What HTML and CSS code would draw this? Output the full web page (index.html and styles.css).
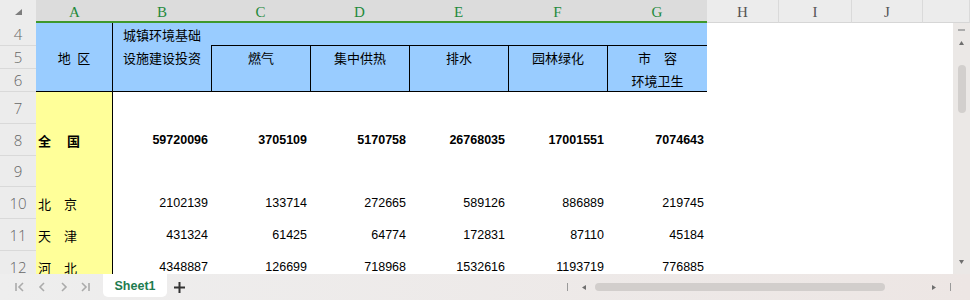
FILE: index.html
```html
<!DOCTYPE html>
<html lang="zh-CN">
<head>
    <meta charset="UTF-8">
    <meta name="viewport" content="width=device-width, initial-scale=1.0">
    <title>城镇环境基础设施建设投资</title>
    <link rel="stylesheet" href="styles.css">
</head>
<body>
    <div class="sheet">
        <!-- 列标题 -->
        <div class="col-heads">
            <div class="corner">
                <svg width="7" height="6" viewBox="0 0 7 6"><polygon points="7,0 7,6 0,6" fill="#7d7d7d"/></svg>
            </div>
            <div class="col-head is-selected">A</div>
            <div class="col-head is-selected">B</div>
            <div class="col-head is-selected">C</div>
            <div class="col-head is-selected">D</div>
            <div class="col-head is-selected">E</div>
            <div class="col-head is-selected">F</div>
            <div class="col-head is-selected">G</div>
            <div class="col-head">H</div>
            <div class="col-head">I</div>
            <div class="col-head">J</div>
            <div class="col-head"></div>
        </div>

        <div class="body">
            <div class="cells">
                <!-- 表头 第4-6行 -->
                <div class="head-block">
                    <div class="row-num r4">4</div>
                    <div class="row-num r5">5</div>
                    <div class="row-num r6">6</div>
                    <div class="hcell region">地&ensp;区</div>
                    <div class="hcell invest">城镇环境基础<br>设施建设投资</div>
                    <div class="hcell group"></div>
                    <div class="hcell sub col-c">燃气</div>
                    <div class="hcell sub col-d">集中供热</div>
                    <div class="hcell sub col-e">排水</div>
                    <div class="hcell sub col-f">园林绿化</div>
                    <div class="hcell sub col-g">市　容<br>环境卫生</div>
                </div>

                <div class="row">
                    <div class="row-num">7</div>
                    <div class="name"></div>
                </div>
                <div class="row is-total">
                    <div class="row-num">8</div>
                    <div class="name">全　 国</div>
                    <div class="num">59720096</div>
                    <div class="num">3705109</div>
                    <div class="num">5170758</div>
                    <div class="num">26768035</div>
                    <div class="num">17001551</div>
                    <div class="num">7074643</div>
                </div>
                <div class="row row-short">
                    <div class="row-num">9</div>
                    <div class="name"></div>
                </div>
                <div class="row">
                    <div class="row-num">10</div>
                    <div class="name">北　京</div>
                    <div class="num">2102139</div>
                    <div class="num">133714</div>
                    <div class="num">272665</div>
                    <div class="num">589126</div>
                    <div class="num">886889</div>
                    <div class="num">219745</div>
                </div>
                <div class="row">
                    <div class="row-num">11</div>
                    <div class="name">天　津</div>
                    <div class="num">431324</div>
                    <div class="num">61425</div>
                    <div class="num">64774</div>
                    <div class="num">172831</div>
                    <div class="num">87110</div>
                    <div class="num">45184</div>
                </div>
                <div class="row">
                    <div class="row-num">12</div>
                    <div class="name">河　北</div>
                    <div class="num">4348887</div>
                    <div class="num">126699</div>
                    <div class="num">718968</div>
                    <div class="num">1532616</div>
                    <div class="num">1193719</div>
                    <div class="num">776885</div>
                </div>
            </div>

            <!-- 垂直滚动条 -->
            <div class="vscroll">
                <span class="vs-dash"></span>
                <svg class="vs-up" width="5" height="4" viewBox="0 0 5 4"><polygon points="2.5,0 5,4 0,4" fill="#6f6f6f"/></svg>
                <span class="vs-thumb"></span>
                <svg class="vs-down" width="5" height="4" viewBox="0 0 5 4"><polygon points="0,0 5,0 2.5,4" fill="#6f6f6f"/></svg>
            </div>
        </div>

        <!-- 工作表标签栏 -->
        <div class="tabbar">
            <div class="nav">
                <svg width="10" height="10" viewBox="0 0 10 10"><path d="M1 1v8M8 1L4 5l4 4" fill="none" stroke="#ababab" stroke-width="1.6"/></svg>
                <svg width="10" height="10" viewBox="0 0 10 10"><path d="M7 1L3 5l4 4" fill="none" stroke="#ababab" stroke-width="1.6"/></svg>
                <svg width="10" height="10" viewBox="0 0 10 10"><path d="M3 1l4 4-4 4" fill="none" stroke="#ababab" stroke-width="1.6"/></svg>
                <svg width="10" height="10" viewBox="0 0 10 10"><path d="M1 1l4 4-4 4M8 1v8" fill="none" stroke="#ababab" stroke-width="1.6"/></svg>
            </div>
            <div class="tab">Sheet1</div>
            <svg class="add-sheet" width="11" height="11" viewBox="0 0 11 11"><path d="M5.5 0v11M0 5.5h11" stroke="#333" stroke-width="2"/></svg>
            <div class="hscroll">
                <span class="hs-tick"></span>
                <svg class="hs-left" width="4" height="5" viewBox="0 0 4 5"><polygon points="0,2.5 4,0 4,5" fill="#6f6f6f"/></svg>
                <span class="hs-thumb"></span>
                <svg class="hs-right" width="4" height="5" viewBox="0 0 4 5"><polygon points="0,0 4,2.5 0,5" fill="#6f6f6f"/></svg>
                <span class="hs-tick hs-tick-end"></span>
            </div>
        </div>
    </div>
</body>
</html>
```

FILE: styles.css
```css
body {
    margin: 0;
    background: #fff;
    font-family: 'Liberation Sans', Arial, 'Noto Sans CJK SC', sans-serif;
}
.sheet {
    --cols: 36px 77px 98px 99px 99px 99px 99px 100px 72px 73px 71px 1fr;
    width: 970px;
    height: 300px;
    overflow: hidden;
    display: flex;
    flex-direction: column;
}
/* 列标题 */
.col-heads {
    display: grid;
    grid-template-columns: var(--cols);
    height: 23px;
    background: #ececec;
}
.corner {
    display: flex;
    justify-content: flex-start;
    align-items: flex-start;
    padding: 9px 0 0 15px;
    box-sizing: border-box;
}
.col-head {
    box-sizing: border-box;
    border-bottom: 1px solid #d6d6d6;
    border-right: 1px solid #dadada;
    padding-top: 3px;
    line-height: 18px;
    text-align: center;
    font-family: 'Liberation Serif', 'Times New Roman', serif;
    font-size: 15px;
    color: #555;
}
.col-head.is-selected {
    background: #dcdcdc;
    border-right: none;
    border-bottom: 2px solid #3f982c;
    color: #1f8a3b;
}
/* 表格区域 */
.body {
    display: flex;
    height: 251px;
}
.cells {
    flex: 1;
    overflow: hidden;
    background: #fff;
}
.row-num {
    grid-column: 1;
    box-sizing: border-box;
    background: #ececec;
    border-bottom: 1px solid #d9d9d9;
    display: flex;
    align-items: center;
    justify-content: center;
    font-family: 'Open Sans', 'Liberation Sans', sans-serif;
    font-weight: 300;
    font-size: 15px;
    color: #666;
}
.head-block {
    display: grid;
    grid-template-columns: var(--cols);
    grid-template-rows: 23px 23px 23px;
}
.r4 { grid-row: 1; }
.r5 { grid-row: 2; }
.r6 { grid-row: 3; }
.hcell {
    box-sizing: border-box;
    background: #99ccff;
    border-bottom: 1px solid #000;
    font-family: 'Noto Sans CJK SC', sans-serif;
    font-size: 13px;
    line-height: 23px;
    color: #000;
}
.region {
    grid-column: 2;
    grid-row: 1 / 4;
    border-right: 1px solid #000;
    display: flex;
    align-items: center;
    justify-content: center;
}
.invest {
    grid-column: 3;
    grid-row: 1 / 4;
    padding-left: 10px;
}
.group {
    grid-column: 4 / 9;
    grid-row: 1;
}
.sub {
    grid-row: 2 / 4;
    border-left: 1px solid #000;
    text-align: center;
}
.col-c { grid-column: 4; }
.col-d { grid-column: 5; }
.col-e { grid-column: 6; }
.col-f { grid-column: 7; }
.col-g { grid-column: 8; }
.row {
    display: grid;
    grid-template-columns: var(--cols);
    height: 32px;
}
.row-short {
    height: 31px;
}
.name {
    box-sizing: border-box;
    background: #ffff99;
    border-right: 1px solid #000;
    padding-left: 2px;
    display: flex;
    align-items: center;
    font-family: 'Noto Sans CJK SC', sans-serif;
    font-size: 13px;
    color: #000;
}
.num {
    display: flex;
    align-items: center;
    justify-content: flex-end;
    padding-right: 3px;
    font-size: 12.5px;
    color: #000;
}
.is-total .name,
.is-total .num {
    font-weight: bold;
}
/* 垂直滚动条 */
.vscroll {
    width: 17px;
    background: #ebe8e6;
    display: flex;
    flex-direction: column;
    align-items: center;
}
.vs-dash {
    width: 7px;
    height: 2px;
    margin-top: 6px;
    background: #acacac;
}
.vs-up {
    margin-top: 10px;
}
.vs-thumb {
    width: 8px;
    height: 48px;
    margin-top: 20px;
    border-radius: 4px;
    background: #d2cfcd;
}
.vs-down {
    margin-top: auto;
    margin-bottom: 10px;
}
/* 标签栏 */
.tabbar {
    height: 26px;
    display: flex;
    align-items: center;
    background: linear-gradient(90deg, #eeeeee, #ede6e4);
}
.nav {
    display: flex;
    gap: 12px;
    padding-left: 15px;
}
.tab {
    align-self: flex-start;
    margin-left: 12px;
    width: 64px;
    height: 23px;
    background: #fff;
    border-radius: 0 0 5px 5px;
    text-align: center;
    line-height: 24px;
    font-size: 12.5px;
    font-weight: bold;
    color: #1e7b4f;
}
.add-sheet {
    margin-left: 7px;
}
.hscroll {
    margin-left: auto;
    margin-right: 19px;
    display: flex;
    align-items: center;
}
.hs-tick {
    width: 1px;
    height: 8px;
    background: #9a9a9a;
}
.hs-left {
    margin-left: 14px;
}
.hs-thumb {
    margin-left: 9px;
    width: 290px;
    height: 8px;
    border-radius: 4px;
    background: #d2cecc;
}
.hs-right {
    margin-left: 47px;
}
.hs-tick-end {
    margin-left: 14px;
}
```
